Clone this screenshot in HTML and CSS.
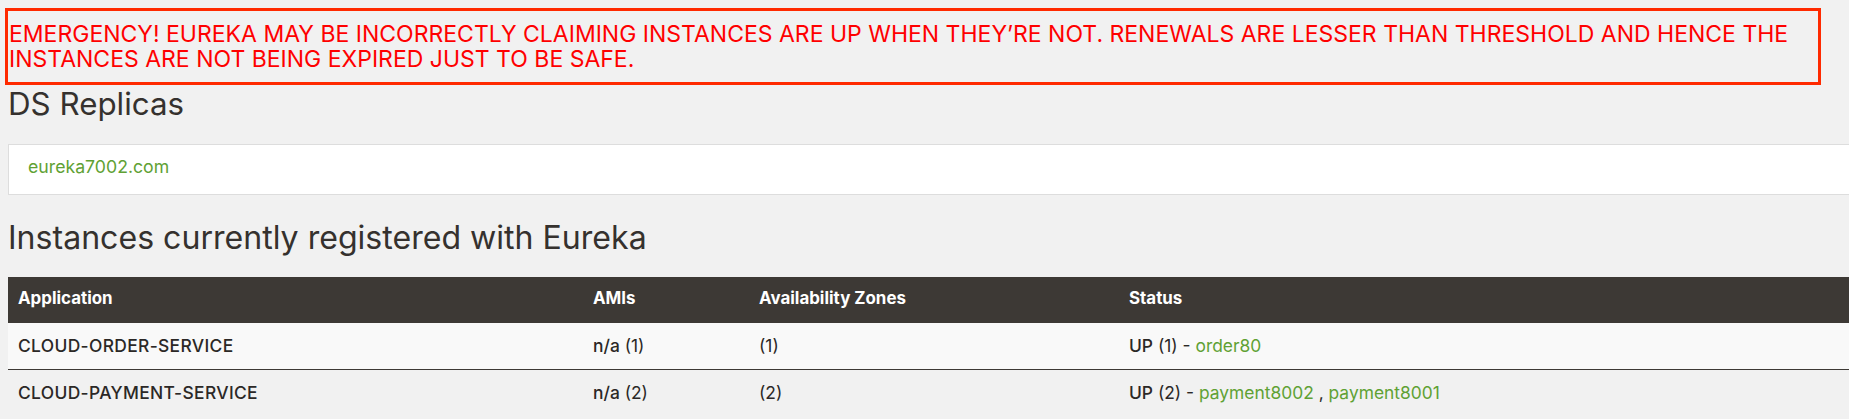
FILE: index.html
```html
<!DOCTYPE html>
<html lang="en">
<head>
<meta charset="utf-8">
<title>Eureka</title>
<link rel="stylesheet" href="styles.css">
</head>
<body>
<div class="page">
  <div class="alert">EMERGENCY! EUREKA MAY BE INCORRECTLY CLAIMING INSTANCES ARE UP WHEN THEY’RE NOT. RENEWALS ARE LESSER THAN THRESHOLD AND HENCE THE INSTANCES ARE NOT BEING EXPIRED JUST TO BE SAFE.</div>

  <h2 class="title title-ds">DS Replicas</h2>
  <ul class="replicas">
    <li class="replica"><a class="link" href="#">eureka7002.com</a></li>
  </ul>

  <h2 class="title title-inst">Instances currently registered with Eureka</h2>
  <table class="instances">
    <colgroup>
      <col class="c-app">
      <col class="c-ami">
      <col class="c-zone">
      <col class="c-status">
    </colgroup>
    <thead>
      <tr><th>Application</th><th>AMIs</th><th>Availability Zones</th><th>Status</th></tr>
    </thead>
    <tbody>
      <tr class="odd">
        <td><b class="app">CLOUD-ORDER-SERVICE</b></td>
        <td><b>n/a</b> (1)</td>
        <td>(1)</td>
        <td><b>UP</b> (1) - <a class="link" href="#">order80</a></td>
      </tr>
      <tr>
        <td><b class="app">CLOUD-PAYMENT-SERVICE</b></td>
        <td><b>n/a</b> (2)</td>
        <td>(2)</td>
        <td><b>UP</b> (2) - <a class="link" href="#">payment8002</a> , <a class="link" href="#">payment8001</a></td>
      </tr>
    </tbody>
  </table>
</div>
</body>
</html>
```
FILE: styles.css
```css
html, body {
  margin: 0;
  padding: 0;
  background: #f1f1f1;
  overflow: hidden;
}
body {
  font-family: "Inter", "DejaVu Sans", sans-serif;
  color: #3d3935;
}
.page {
  padding: 8px 0 0 8px;
  margin-right: -12px;
}
.alert {
  box-sizing: border-box;
  width: 1816px;
  margin-left: -3px;
  border: 3px solid #ff2a00;
  padding: 11px 0 10px 1px;
  color: #ff0000;
  font-size: 23px;
  line-height: 25px;
}
.title {
  font-weight: 400;
  margin: 0;
  color: #35312e;
}
.title-ds {
  margin-top: 2px;
  font-size: 31.3px;
  line-height: 34px;
}
.title-inst {
  margin-top: 25px;
  font-size: 32.1px;
  line-height: 36px;
}
.replicas {
  list-style: none;
  margin: 23px 0 0 0;
  padding: 0;
  background: #ffffff;
  border: 1px solid #dddddd;
}
.replica {
  padding: 12px 19px 17px;
  font-size: 17.7px;
  line-height: 20px;
}
.link {
  color: #5fa134;
  text-decoration: none;
}
.instances {
  margin-top: 21px;
  width: 100%;
  border-collapse: collapse;
  table-layout: fixed;
}
.c-app { width: 575px; }
.c-ami { width: 166px; }
.c-zone { width: 370px; }
.instances th {
  background: #3d3935;
  color: #ffffff;
  font-weight: 700;
  font-size: 16.9px;
  line-height: 20px;
  text-align: left;
  padding: 11px 10px 14px;
}
.instances td {
  font-size: 17.4px;
  line-height: 20px;
  padding: 13px 10px 13px;
  border-top: 1px solid #3d3935;
  color: #2b2826;
  white-space: nowrap;
}
.instances td b {
  font-weight: 500;
}
.instances td .app {
  letter-spacing: 0.35px;
}
.instances tr.odd td {
  background: #f9f9f9;
}
```
